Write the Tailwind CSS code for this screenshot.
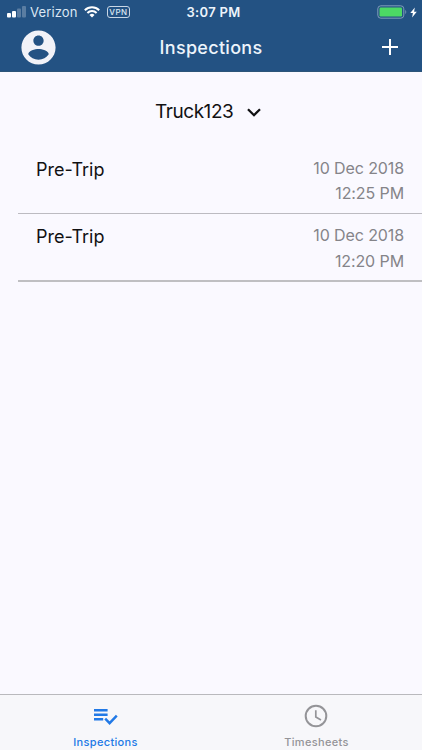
<!DOCTYPE html>
<html lang="en">
<head>
  <meta charset="UTF-8" />
  <meta name="viewport" content="width=device-width, initial-scale=1.0"/>
  <title>Inspections</title>
  <script src="https://cdn.jsdelivr.net/npm/@tailwindcss/browser@4"></script>
</head>
<body class="h-screen flex flex-col overflow-hidden bg-[#faf9ff] font-['Inter',sans-serif] text-[#111113]">
  <!-- Header -->
  <header class="h-[72px] shrink-0 bg-[#235283] text-white border-b border-[#2d5579]">
    <!-- Status bar -->
    <div class="h-6 grid grid-cols-[1fr_auto_1fr] items-center pl-[7px] pr-[5px]">
      <div class="flex items-center">
        <svg class="w-[19px] h-3" viewBox="0 0 19 12" fill="currentColor">
          <rect x="0" y="7" width="4" height="4.5" rx="1"/>
          <rect x="5" y="5" width="4" height="6.5" rx="1"/>
          <rect x="10" y="2.5" width="4" height="9" rx="1" opacity=".25"/>
          <rect x="15" y="0" width="4" height="11.5" rx="1" opacity=".25"/>
        </svg>
        <span class="ml-[4px] w-[47px] text-[13px] leading-6 tracking-[0.15px] text-[#dce7f3] whitespace-nowrap">Verizon</span>
        <svg class="ml-[7px] w-4 h-3" viewBox="0 0 16 12" fill="none" stroke="currentColor" stroke-width="2">
          <path d="M.8 4.3a10.3 10.3 0 0 1 14.4 0M3.4 7a6.5 6.5 0 0 1 9.2 0"/>
          <path d="M8 11.6 5.5 9.1a3.5 3.5 0 0 1 5 0z" fill="currentColor" stroke="none"/>
        </svg>
        <span class="ml-[7px] w-[23px] h-[12px] rounded-[3px] border border-[#c8d6e5] text-[8px] leading-[10px] text-center font-medium tracking-[0.5px] text-[#dce7f3]">VPN</span>
      </div>
      <span class="pl-[3px] text-[13px] leading-6 font-semibold tracking-[0.3px] text-[#edf4fb]">3:07 PM</span>
      <div class="flex items-center justify-end">
        <svg class="w-[30px] h-[14px]" viewBox="0 0 30 14">
          <rect x=".8" y=".8" width="26" height="12.4" rx="3" fill="none" stroke="#7f9db9"/>
          <rect x="2.5" y="2.5" width="22.5" height="9" rx="1.2" fill="#4cd964"/>
          <path d="M28.3 5v4c1.3-.6 1.3-3.4 0-4z" fill="#7f9db9"/>
        </svg>
        <svg class="ml-[3px] w-[7px] h-[11px]" viewBox="0 0 7 11" fill="currentColor"><path d="M4.8.5.3 6h2.6L2.1 10.5 6.8 4.8H4.1z"/></svg>
      </div>
    </div>
    <!-- Title bar -->
    <nav class="h-[46px] grid grid-cols-[1fr_auto_1fr] items-center pl-[18px] pr-[18px]">
      <svg class="w-[41px] h-[41px] text-[#f1f2f8]" viewBox="0 0 24 24" fill="currentColor">
        <path d="M12 2C6.48 2 2 6.48 2 12s4.48 10 10 10 10-4.48 10-10S17.52 2 12 2zm0 3c1.66 0 3 1.34 3 3s-1.34 3-3 3-3-1.34-3-3 1.34-3 3-3zm0 14.2c-2.5 0-4.71-1.28-6-3.22.03-1.99 4-3.08 6-3.08 1.99 0 5.97 1.09 6 3.08-1.29 1.94-3.5 3.22-6 3.22z"/>
      </svg>
      <h1 class="pt-[2px] text-[18px] leading-6 font-medium tracking-[0.3px] text-[#edf4fb]">Inspections</h1>
      <svg class="justify-self-end mr-[6px] w-4 h-4" viewBox="0 0 16 16" stroke="currentColor" stroke-width="2"><path d="M8 0v16M0 8h16"/></svg>
    </nav>
  </header>

  <main class="flex-1">
    <!-- Vehicle picker -->
    <div class="h-[74px] pl-[155px] pt-[26px] flex items-start">
      <span class="w-[80px] pt-px text-[19px] leading-[26px] tracking-[-0.45px] whitespace-nowrap">Truck123</span>
      <svg class="ml-3 mt-[10px] w-[14px] h-[9px]" viewBox="0 0 14 9" fill="none" stroke="currentColor" stroke-width="2.3"><path d="m1 1.2 6 6 6-6"/></svg>
    </div>

    <!-- Inspection list -->
    <ul class="ml-[18px]">
      <li class="h-[68px] pl-[18px] pr-[18px] pt-[10px] flex justify-between border-b border-[#bcbbc1]">
        <span class="text-[18px] leading-[28px]">Pre-Trip</span>
        <span class="text-right text-[16px] leading-[25px] tracking-[-0.1px] text-[#858489]">10 Dec 2018<br>12:25 PM</span>
      </li>
      <li class="h-[68px] pl-[18px] pr-[18px] pt-[9px] flex justify-between border-b-2 border-[#bfbfc2]">
        <span class="text-[18px] leading-[28px]">Pre-Trip</span>
        <span class="-mt-px text-right text-[16px] leading-[26px] tracking-[-0.1px] text-[#858489]">10 Dec 2018<br>12:20 PM</span>
      </li>
    </ul>
  </main>

  <!-- Tab bar -->
  <footer class="h-[56px] shrink-0 grid grid-cols-2 bg-[#f7f7fa] border-t border-[#b9b9bd]">
    <div class="flex flex-col items-center text-[#2179e6]">
      <svg class="mt-[9px] w-[25px] h-[25px]" viewBox="0 0 25 25" fill="none" stroke="currentColor" stroke-width="2.4">
        <path d="M1 6.3h13.6M1 10.8h13.6M1 15.3h9.2M12.2 14.6l4.4 4.6 7.2-7.6"/>
      </svg>
      <span class="mt-[5px] text-[11px] leading-4 font-medium tracking-[0.35px]">Inspections</span>
    </div>
    <div class="flex flex-col items-center text-[#949498]">
      <svg class="mt-[9px] w-[25px] h-[25px]" viewBox="0 0 25 25" fill="none" stroke="currentColor">
        <circle cx="12" cy="12" r="10.3" stroke-width="2"/>
        <path d="M11.8 6.2v6.8l5.2 3" stroke-width="1.7"/>
      </svg>
      <span class="mt-[5px] text-[11px] leading-4 font-medium tracking-[0.35px]">Timesheets</span>
    </div>
  </footer>
</body>
</html>
